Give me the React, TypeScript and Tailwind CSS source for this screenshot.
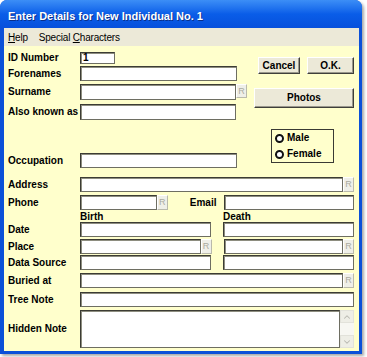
import React from 'react'
import { ChevronDown, ChevronUp } from 'lucide-react'

const field =
  'bg-white border border-[#3c3c34] border-b-[#6e6e62] border-r-[#6e6e62] shadow-[inset_1px_1px_0_#8e8e80]'

function RButton({ className = 'h-[14px]' }: { className?: string }) {
  return (
    <div
      className={`flex w-[11px] items-center justify-center border border-t-white border-l-white border-b-[#b9b9ab] border-r-[#b9b9ab] bg-[#efefe8] text-[9px] leading-none text-[#aaaaa0] ${className}`}
    >
      R
    </div>
  )
}

function Label({ children }: { children: React.ReactNode }) {
  return <div className="w-[72px] shrink-0 text-[10px] font-bold leading-none">{children}</div>
}

function Button({ className, children }: { className: string; children: React.ReactNode }) {
  return (
    <button
      type="button"
      className={`flex items-center justify-center border border-t-white border-l-white border-b-[#3f3f3a] border-r-[#3f3f3a] bg-[#ece9d8] text-[10px] font-bold leading-none shadow-[inset_-1px_-1px_0_#9a988c] ${className}`}
    >
      {children}
    </button>
  )
}

function Radio({ label }: { label: string }) {
  return (
    <div className="flex items-center gap-[3px]">
      <span className="h-[9px] w-[9px] rounded-full border-2 border-[#111] bg-white" />
      <span className="text-[10px] font-bold leading-none">{label}</span>
    </div>
  )
}

export default function App() {
  return (
    <div className="min-h-screen bg-white font-['Liberation_Sans',Arial,sans-serif] text-black">
      <div className="flex w-[362px] flex-col overflow-hidden rounded-t-[7px] bg-[#0b50d8] shadow-[2px_2px_3px_rgba(0,0,0,0.35)]">
        {/* title bar */}
        <div className="flex h-[28px] items-center bg-gradient-to-b from-[#3c8ef6] via-[#0a5de8] to-[#0750dc] pl-2 pt-[4px]">
          <span className="text-[11px] font-bold text-white [text-shadow:1px_1px_0_#0a2f8a]">
            Enter Details for New Individual No. 1
          </span>
        </div>

        <div className="border-b-[3px] border-l-4 border-r-[3px] border-[#0b50d8]">
          {/* menu */}
          <div className="flex h-[18px] items-center gap-[11px] bg-[#ece9d8] pl-1 text-[10px] tracking-[-0.2px]">
            <span>
              <span className="underline">H</span>elp
            </span>
            <span>
              Special <span className="underline">C</span>haracters
            </span>
          </div>

          {/* client */}
          <div className="flex flex-col bg-[#ffffcc] pb-[3px] pl-1 pr-[5px] pt-[6px]">
            <div className="flex">
              <div className="flex w-[246px] flex-col">
                <div className="flex h-[12px] items-center">
                  <Label>ID Number</Label>
                  <div className={`${field} flex h-[12px] w-[35px] items-center pl-[2px] text-[10px] font-bold leading-none`}>1</div>
                </div>
                <div className="mt-[2px] flex h-[15px] items-center">
                  <Label>Forenames</Label>
                  <div className={`${field} h-[15px] w-[157px]`} />
                </div>
                <div className="mt-[3px] flex h-[16px] items-center">
                  <Label>Surname</Label>
                  <div className={`${field} h-[16px] w-[156px]`} />
                  <div className="self-start">
                    <RButton />
                  </div>
                </div>
                <div className="mt-[4px] flex h-[16px] items-center">
                  <Label>Also known as</Label>
                  <div className={`${field} h-[16px] w-[156px]`} />
                </div>
                <div className="mt-[33px] flex h-[15px] items-center">
                  <Label>Occupation</Label>
                  <div className={`${field} h-[15px] w-[157px]`} />
                </div>
              </div>

              <div className="flex w-[100px] flex-col">
                <div className="mt-[5px] flex pl-1">
                  <Button className="h-[17px] w-[42px]">Cancel</Button>
                  <Button className="ml-[7px] h-[17px] w-[47px]">O.K.</Button>
                </div>
                <Button className="mt-[14px] h-[20px] w-[100px]">Photos</Button>
                <div className="ml-[17px] mt-[21px] flex h-[34px] w-[63px] flex-col justify-center gap-[6px] border border-[#3a3a34] pl-[3px]">
                  <Radio label="Male" />
                  <Radio label="Female" />
                </div>
              </div>
            </div>

            <div className="mt-[9px] flex h-[15px] items-center">
              <Label>Address</Label>
              <div className={`${field} h-[15px] w-[263px]`} />
              <RButton className="h-[15px]" />
            </div>

            <div className="mt-[3px] flex h-[15px] items-center">
              <Label>Phone</Label>
              <div className={`${field} h-[15px] w-[77px]`} />
              <RButton className="h-[15px]" />
              <div className="w-[56px] pr-[7px] text-right text-[10px] font-bold leading-none">Email</div>
              <div className={`${field} h-[15px] w-[131px]`} />
            </div>

            <div className="flex h-[12px] items-end text-[10px] font-bold leading-none">
              <div className="w-[72px]" />
              <div className="w-[143px]">Birth</div>
              <div>Death</div>
            </div>

            <div className="flex h-[15px] items-center">
              <Label>Date</Label>
              <div className={`${field} h-[15px] w-[131px]`} />
              <div className={`${field} ml-[12px] h-[15px] w-[131px]`} />
            </div>

            <div className="mt-[2px] flex h-[15px] items-center">
              <Label>Place</Label>
              <div className={`${field} h-[15px] w-[121px]`} />
              <RButton className="h-[15px]" />
              <div className={`${field} ml-[12px] h-[15px] w-[120px]`} />
              <RButton className="h-[15px]" />
            </div>

            <div className="mt-[1px] flex h-[15px] items-center">
              <Label>Data Source</Label>
              <div className={`${field} h-[15px] w-[131px]`} />
              <div className={`${field} ml-[12px] h-[15px] w-[131px]`} />
            </div>

            <div className="mt-[3px] flex h-[15px] items-center">
              <Label>Buried at</Label>
              <div className={`${field} h-[15px] w-[263px]`} />
              <RButton className="h-[15px]" />
            </div>

            <div className="mt-[4px] flex h-[15px] items-center">
              <Label>Tree Note</Label>
              <div className={`${field} h-[15px] w-[274px]`} />
            </div>

            <div className="mt-[3px] flex h-[38px] items-center">
              <Label>Hidden Note</Label>
              <div className={`${field} h-[38px] w-[260px]`} />
              <div className="flex h-[38px] w-[14px] flex-col justify-between bg-[#f7f7f2]">
                <div className="flex h-[13px] items-center justify-center border border-[#e2e2da] bg-[#eeeee6]">
                  <ChevronUp size={10} strokeWidth={2.5} color="#b8b8b0" />
                </div>
                <div className="flex h-[13px] items-center justify-center border border-[#e2e2da] bg-[#eeeee6]">
                  <ChevronDown size={10} strokeWidth={2.5} color="#b8b8b0" />
                </div>
              </div>
            </div>
          </div>
        </div>
      </div>
    </div>
  )
}
